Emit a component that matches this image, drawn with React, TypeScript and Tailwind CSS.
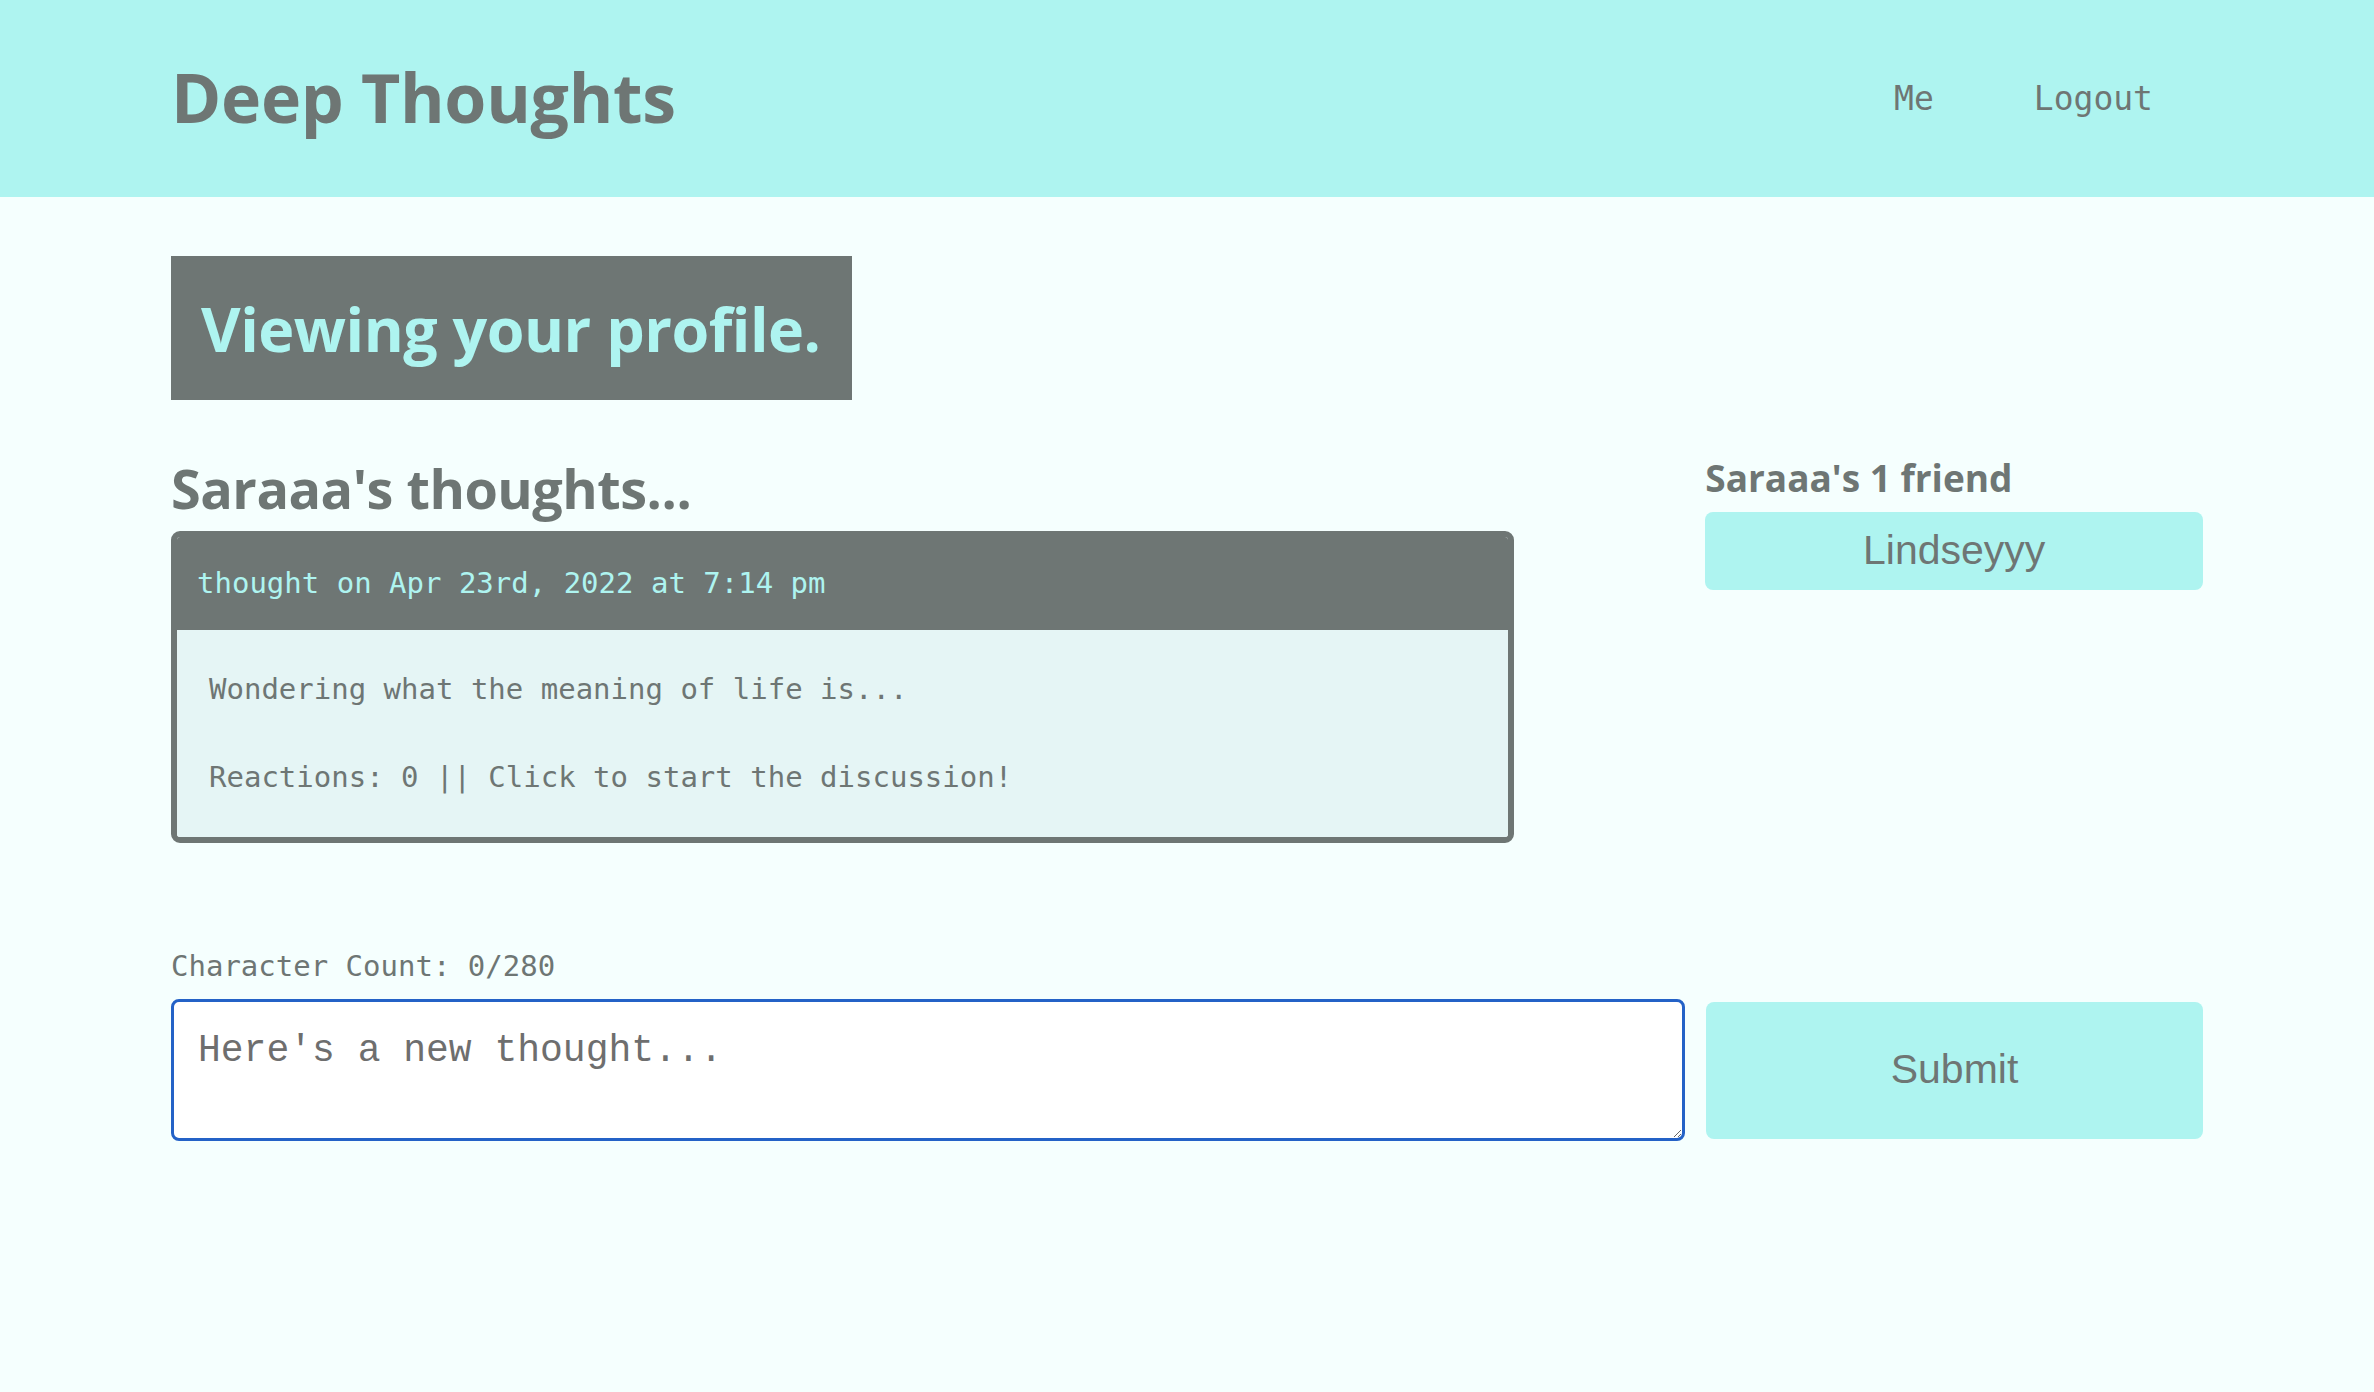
import React from "react";

const sans = "font-['Open_Sans','Lato',sans-serif]";
const mono = "font-['DejaVu_Sans_Mono',monospace]";
const arial = "font-['Liberation_Sans',Arial,sans-serif]";

export default function App() {
  return (
    <div className="min-h-[1392px] w-full bg-[#f5fffe]">
      <header className="flex h-[197px] items-center justify-between bg-[#aef4f0] pl-[171px] pr-[221px]">
        <h1 className={`${sans} -mt-[4px] text-[68px] font-bold leading-none tracking-[-0.3px] text-[#6e7674]`}>Deep Thoughts</h1>
        <nav className={`${mono} flex items-center gap-[100px] text-[33px] text-[#6e7674]`}>
          <span>Me</span>
          <span>Logout</span>
        </nav>
      </header>

      <main className="px-[171px] pt-[59px]">
        <div className="flex h-[144px] w-[681px] items-center bg-[#6e7674] px-[30px]">
          <h2 className={`${sans} text-[61px] font-bold leading-none tracking-[-0.5px] text-[#aef4f0]`}>Viewing your profile.</h2>
        </div>

        <div className="mt-[56px] flex items-start">
          <div className="w-[1344px]">
            <h2 className={`${sans} mb-[10px] text-[54px] font-bold leading-[65px] tracking-[-0.5px] text-[#6e7674]`}>Saraaa's thoughts...</h2>
            <div className="overflow-hidden rounded-[9px] border-[6px] border-[#6e7674]">
              <div className={`${mono} flex h-[93px] items-center bg-[#6e7674] px-[20px] text-[29px] text-[#aef4f0]`}>
                thought on Apr 23rd, 2022 at 7:14 pm
              </div>
              <div className={`${mono} bg-[#e5f5f5] px-[32px] pt-[38px] pb-[39px] text-[29px] leading-[42px] text-[#6e7674]`}>
                <p>Wondering what the meaning of life is...</p>
                <p className="mt-[46px]">Reactions: 0 || Click to start the discussion!</p>
              </div>
            </div>
          </div>

          <div className="ml-[191px] w-[498px]">
            <h3 className={`${sans} mb-[13px] text-[37px] font-bold leading-[43px] text-[#6e7674]`}>Saraaa's 1 friend</h3>
            <button className={`${arial} flex h-[78px] w-full items-center justify-center rounded-[8px] bg-[#aef4f0] text-[41px] text-[#6e7674]`}>
              Lindseyyy
            </button>
          </div>
        </div>

        <div className="mt-[102px]">
          <p className={`${mono} text-[29px] leading-[42px] text-[#6e7674]`}>Character Count: 0/280</p>
          <div className="mt-[12px] flex items-center gap-[21px]">
            <textarea
              autoFocus
              placeholder="Here's a new thought..."
              className="h-[142px] w-[1514px] rounded-[8px] border-[3px] border-[#2462c7] bg-white px-[24px] pt-[27px] font-['Liberation_Mono','Courier_New',monospace] text-[38px] leading-[44px] text-[#333] outline-none placeholder:text-[#6e6e6e]"
            />
            <button className={`${arial} h-[137px] w-[497px] rounded-[8px] bg-[#aef4f0] text-[41px] text-[#6e7674]`}>
              Submit
            </button>
          </div>
        </div>
      </main>
    </div>
  );
}
